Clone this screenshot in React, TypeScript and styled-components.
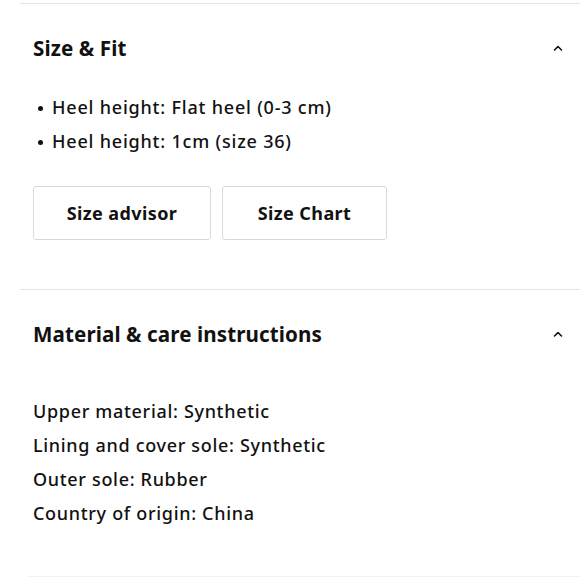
import React from 'react';
import styled, { createGlobalStyle } from 'styled-components';

const GlobalStyle = createGlobalStyle`
  html, body {
    margin: 0;
    padding: 0;
    background: #ffffff;
  }
  body {
    font-family: 'Noto Sans', 'Open Sans', sans-serif;
    color: #1a1a1a;
  }
`;

const Page = styled.div`
  width: 580px;
  height: 580px;
  overflow: hidden;
  padding-top: 3px;
  box-sizing: border-box;
`;

const Section = styled.section`
  margin-left: 20px;
  border-top: 1px solid #e6e6e6;
  padding: 0 17px 0 13px;
`;

const Header = styled.div`
  display: flex;
  align-items: center;
  justify-content: space-between;
  height: 88px;
`;

const Title = styled.h2`
  margin: 0;
  font-family: 'Noto Sans', sans-serif;
  font-size: 20.6px;
  font-weight: 700;
  letter-spacing: 0.1px;
  color: #111;
`;

const Chevron = styled.svg`
  width: 10px;
  height: 8px;
`;

const Bullets = styled.ul`
  margin: -2px 0 0;
  padding: 0;
  list-style: none;
  display: flex;
  flex-direction: column;
`;

const Bullet = styled.li`
  font-size: 18px;
  font-weight: 500;
  line-height: 34px;
  letter-spacing: 0.8px;
  color: #111;
  &::before {
    content: '';
    display: inline-block;
    width: 5px;
    height: 5px;
    border-radius: 50%;
    background: #111;
    vertical-align: middle;
    margin: -2px 9px 0 5px;
  }
`;

const ButtonRow = styled.div`
  display: flex;
  gap: 11px;
  margin-top: 28px;
  margin-bottom: 49px;
`;

const OutlineButton = styled.button<{ $width: number }>`
  width: ${(p) => p.$width}px;
  height: 54px;
  background: #fff;
  border: 1px solid #d9d9d9;
  border-radius: 3px;
  font-family: 'Noto Sans', sans-serif;
  font-size: 18px;
  font-weight: 700;
  letter-spacing: 0.4px;
  color: #111;
  cursor: pointer;
`;

const Lines = styled.div`
  display: flex;
  flex-direction: column;
  padding-top: 16px;
  padding-bottom: 46px;
`;

const Line = styled.p`
  margin: 0;
  font-size: 18px;
  font-weight: 500;
  line-height: 34px;
  letter-spacing: 0.68px;
  color: #111;
`;

const Footer = styled.div`
  margin-left: 28px;
  border-top: 1px solid #f2f2f2;
`;

const ChevronUp = () => (
  <Chevron viewBox="0 0 10 8" fill="none">
    <path d="M1.5 6L5 2.5L8.5 6" stroke="#111" strokeWidth="1.6" strokeLinecap="round" strokeLinejoin="round" />
  </Chevron>
);

export default function App() {
  return (
    <Page>
      <GlobalStyle />
      <Section>
        <Header>
          <Title>Size &amp; Fit</Title>
          <ChevronUp />
        </Header>
        <Bullets>
          <Bullet>Heel height: Flat heel (0-3 cm)</Bullet>
          <Bullet>Heel height: 1cm (size 36)</Bullet>
        </Bullets>
        <ButtonRow>
          <OutlineButton $width={178}>Size advisor</OutlineButton>
          <OutlineButton $width={165}>Size Chart</OutlineButton>
        </ButtonRow>
      </Section>
      <Section>
        <Header>
          <Title>Material &amp; care instructions</Title>
          <ChevronUp />
        </Header>
        <Lines>
          <Line>Upper material: Synthetic</Line>
          <Line>Lining and cover sole: Synthetic</Line>
          <Line>Outer sole: Rubber</Line>
          <Line>Country of origin: China</Line>
        </Lines>
      </Section>
      <Footer />
    </Page>
  );
}
